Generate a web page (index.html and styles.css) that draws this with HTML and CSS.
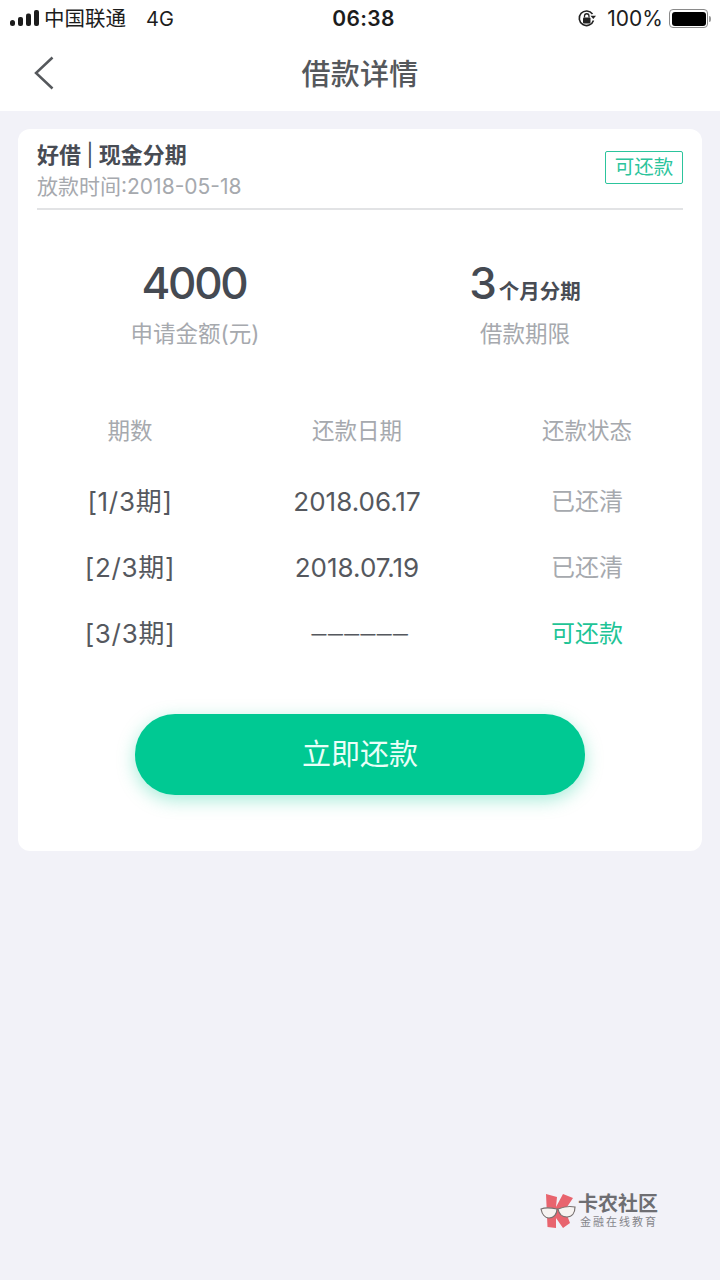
FILE: index.html
```html
<!DOCTYPE html>
<html lang="zh">
<head>
<meta charset="utf-8">
<title>借款详情</title>
<link rel="stylesheet" href="styles.css">
</head>
<body>
<div class="phone">
  <header class="top">
    <div class="status">
      <div class="status-left">
        <svg class="signal" width="29" height="17" viewBox="0 0 29 17"><rect x="0" y="10" width="5" height="6" rx="2.5"/><rect x="8" y="7" width="5" height="9" rx="2"/><rect x="16" y="3.500" width="5" height="12.500" rx="2"/><rect x="24" y="0" width="5" height="16" rx="2"/></svg>
        <span class="carrier">中国联通</span>
        <span class="net">4G</span>
      </div>
      <div class="clock">06:38</div>
      <div class="status-right">
        <svg class="lock" width="20" height="20" viewBox="0 0 20 20"><path d="M16.500 11.500A7.300 7.300 0 1 1 15.500 5" fill="none" stroke="#222" stroke-width="1.600"/><path d="M13.500 6.800h5.500l-2.700 3.200z" fill="#222"/><rect x="6" y="8.500" width="7.500" height="6" rx="1" fill="#222"/><path d="M7.500 8.500V7a2.200 2.200 0 0 1 4.500 0v1.500" fill="none" stroke="#222" stroke-width="1.300"/></svg>
        <span class="pct">100%</span>
        <div class="battery"><div class="battery-fill"></div></div>
        <div class="battery-tip"></div>
      </div>
    </div>
    <nav class="nav">
      <svg class="back" width="22" height="36" viewBox="0 0 22 36"><path d="M19.500 2.500 3 18l16.500 15.500" fill="none" stroke="#55585c" stroke-width="2.500"/></svg>
      <h1 class="title">借款详情</h1>
    </nav>
  </header>

  <main class="card">
    <div class="card-head">
      <div class="head-text">
        <div class="product">好借 <span class="sep">|</span> 现金分期</div>
        <div class="date">放款时间:2018-05-18</div>
      </div>
      <div class="tag">可还款</div>
    </div>

    <div class="stats">
      <div class="stat">
        <div class="stat-value"><span class="big amount">4000</span></div>
        <div class="stat-label">申请金额(元)</div>
      </div>
      <div class="stat">
        <div class="stat-value"><span class="big">3</span><span class="unit">个月分期</span></div>
        <div class="stat-label">借款期限</div>
      </div>
    </div>

    <div class="table">
      <div class="row row-head"><span>期数</span><span>还款日期</span><span>还款状态</span></div>
      <div class="row"><span class="num period">[1/3期]</span><span class="num">2018.06.17</span><span class="muted">已还清</span></div>
      <div class="row"><span class="num period">[2/3期]</span><span class="num">2018.07.19</span><span class="muted">已还清</span></div>
      <div class="row"><span class="num period">[3/3期]</span><span class="num"><span class="dashes">------</span></span><span class="green">可还款</span></div>
    </div>

    <div class="action"><button class="repay">立即还款</button></div>
  </main>

  <div class="watermark">
    <svg width="36" height="38" viewBox="0 0 36 38"><path d="M6 2l11 3-1 10 7-13 10 4-8 12 5 13-7 5-7-10v10l-8.500-1z" fill="#e8646e"/><path d="M1 17c5-2 11-1 16 0 0 5-3 9-8 9-4 0-7-4-8-9zM18 17c5-2 12-3 17-2 0 6-3 10-8 10-5 0-8-3-9-8z" fill="#f6f3f1" stroke="#77706f" stroke-width="1.200"/></svg>
    <div class="wm-text">
      <div class="wm-top">卡农社区</div>
      <div class="wm-sub">金融在线教育</div>
    </div>
  </div>
</div>
</body>
</html>
```

FILE: styles.css
```css
* { box-sizing: border-box; margin: 0; padding: 0; }
html, body { width: 720px; height: 1280px; overflow: hidden; }
body {
  background: #f2f2f8;
  font-family: Inter, "Noto Sans CJK SC", sans-serif;
  color: #484c54;
}
.phone { position: relative; width: 720px; height: 1280px; }

.top { background: #fff; height: 111px; }
.status {
  height: 37px;
  display: grid;
  grid-template-columns: 1fr auto 1fr;
  align-items: center;
  color: #1c1c1c;
  font-size: 21px;
}
.status-left { display: flex; align-items: center; padding-left: 10px; }
.signal { fill: #1c1c1c; margin-right: 5px; }
.carrier { font-size: 20.500px; line-height: 28px; }
.net { margin-left: 20px; font-size: 20px; line-height: 28px; }
.clock { font-size: 21px; font-weight: 600; letter-spacing: 0.300px; margin-left: 7px; }
.status-right { display: flex; align-items: center; justify-content: flex-end; padding-right: 9px; }
.lock { margin-right: 10px; }
.pct { font-size: 21px; margin-right: 6px; }
.battery {
  width: 39px; height: 19px;
  border: 1px solid #8a8a8a;
  border-radius: 4px;
  padding: 1.500px;
}
.battery-fill { width: 100%; height: 100%; background: #000; border-radius: 3px; }
.battery-tip { width: 2px; height: 6px; background: #9a9a9a; border-radius: 0 2px 2px 0; margin-left: 1px; }

.nav { position: relative; height: 74px; display: flex; align-items: center; justify-content: center; }
.back { position: absolute; left: 33px; top: 18px; }
.title { font-size: 29px; font-weight: 500; line-height: 40px; color: #55585c; letter-spacing: 0.200px; margin-top: 1px; }

.card {
  margin: 18px 18px 0;
  height: 722px;
  background: #fff;
  border-radius: 12px;
  display: flex;
  flex-direction: column;
}
.card-head {
  margin: 0 19px;
  height: 81px;
  border-bottom: 2px solid #e2e3e5;
  display: flex;
  justify-content: space-between;
  align-items: flex-start;
}
.head-text { padding-top: 11px; }
.product { font-size: 22px; font-weight: 700; line-height: 30px; color: #484c54; }
.sep { font-weight: 400; }
.date { font-size: 21px; line-height: 30px; color: #a6a9ae; margin-top: 2px; }
.tag {
  margin-top: 22px;
  width: 78px; height: 33px;
  border: 1px solid #2cc49c;
  border-radius: 2px;
  color: #2cc49c;
  font-size: 19.500px;
  line-height: 30px;
  text-align: center;
}

.stats { display: grid; grid-template-columns: 354px 306px; padding-top: 48px; }
.stat { text-align: center; }
.stat-value { height: 50px; display: flex; justify-content: center; align-items: baseline; line-height: 50px; }
.big { font-size: 44px; font-weight: 500; color: #454a52; }
.amount { letter-spacing: -2.300px; margin-right: 2px; }
.unit { font-size: 20.500px; font-weight: 700; color: #484c54; margin-left: 2px; }
.stat-label { margin-top: 11px; font-size: 22.500px; line-height: 30px; color: #a6a9ae; }

.table { margin-top: 48px; }
.row {
  display: grid;
  grid-template-columns: 224px 230px 230px;
  height: 66px;
  align-items: center;
  text-align: center;
  font-size: 24px;
  line-height: 32px;
  color: #55585e;
}
.row-head { height: 68px; font-size: 22.500px; color: #a6a9ae; margin-bottom: 4px; }
.num { font-size: 26px; }
.period { letter-spacing: 0.700px; }
.dashes {
  display: inline-block;
  font-weight: 300;
  letter-spacing: -3.200px;
  transform: scaleX(1.900);
}
.muted { color: #a6a9ae; }
.green { color: #1fc496; }

.action { display: flex; justify-content: center; margin-top: 47px; }
.repay {
  width: 450px; height: 81px;
  border: 0;
  border-radius: 40px;
  background: #00c993;
  color: #eafff8;
  font-family: inherit;
  font-size: 29px;
  padding-bottom: 5px;
  box-shadow: 0 5px 18px rgba(0, 201, 147, 0.350);
}

.watermark {
  position: absolute;
  left: 540px; top: 1192px;
  display: flex;
  align-items: center;
  gap: 2px;
}
.wm-text { text-align: left; }
.wm-top { font-size: 20px; line-height: 22px; font-weight: 700; color: #6e6e72; }
.wm-sub { font-size: 11px; line-height: 14px; letter-spacing: 2px; color: #85858a; padding-left: 2px; }
```
